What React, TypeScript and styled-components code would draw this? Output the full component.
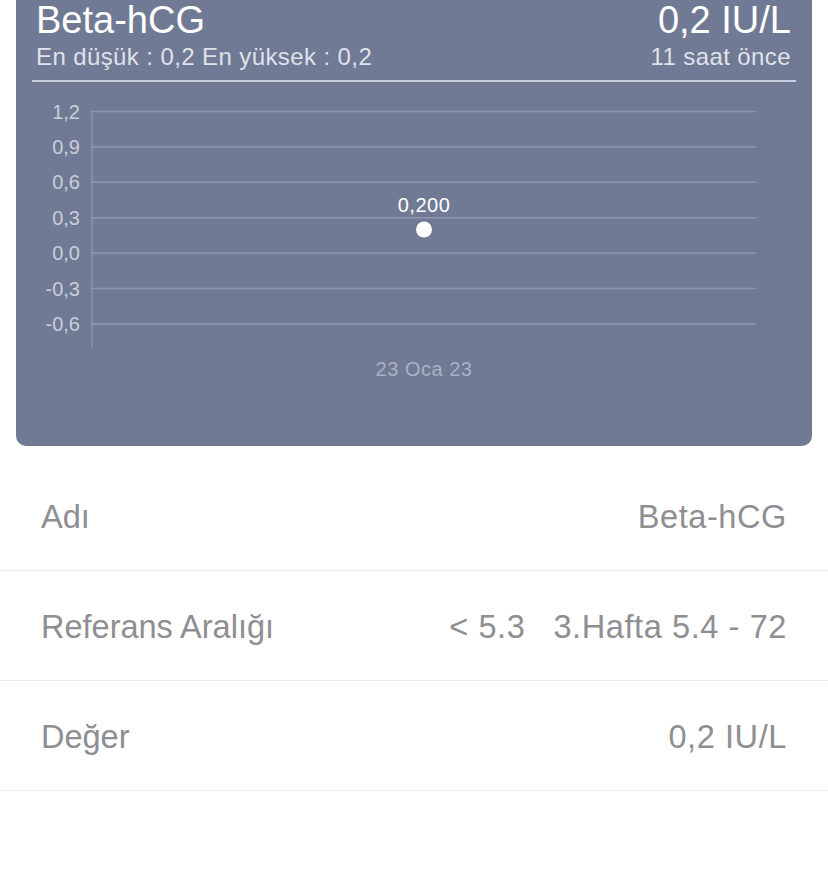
import styled, { createGlobalStyle } from 'styled-components'

const GlobalStyle = createGlobalStyle`
    html, body {
        margin: 0;
        padding: 0;
        background: #ffffff;
        font-family: 'Liberation Sans', Arial, sans-serif;
        overflow: hidden;
    }
`

// grafik ölçüleri (svg içi koordinatlar)
const yTicks = ['1,2', '0,9', '0,6', '0,3', '0,0', '-0,3', '-0,6']
const gridTop = 29.5
const gridStep = 35.4
const axisX = 76
const gridRight = 740

const rows = [
    { label: 'Adı', values: ['Beta-hCG'] },
    { label: 'Referans Aralığı', values: ['< 5.3', '3.Hafta 5.4 - 72'] },
    { label: 'Değer', values: ['0,2 IU/L'] },
]

function Chart() {
    const valueY = gridTop + 4 * gridStep - (0.2 / 0.3) * gridStep
    return (
        <ChartSvg viewBox="0 0 796 364" width="796" height="364">
            {yTicks.map((t, i) => {
                const y = gridTop + i * gridStep
                return (
                    <g key={t}>
                        <line x1={axisX} x2={gridRight} y1={y} y2={y} stroke="rgba(255,255,255,0.22)" strokeWidth="1.5" />
                        <text x="64" y={y + 7} textAnchor="end" fontSize="20" fill="#c9cedb">
                            {t}
                        </text>
                    </g>
                )
            })}
            <line x1={axisX} x2={axisX} y1={gridTop - 1} y2={265} stroke="rgba(255,255,255,0.2)" strokeWidth="1.5" />
            <text x="408" y="130" textAnchor="middle" fontSize="20" letterSpacing="0.5" fill="#ffffff">
                0,200
            </text>
            <circle cx="408" cy={valueY} r="8" fill="#ffffff" />
            <text x="408" y="294" textAnchor="middle" fontSize="20" letterSpacing="0.5" fill="#a9b0c3">
                23 Oca 23
            </text>
        </ChartSvg>
    )
}

function App() {
    return (
        <Page>
            <GlobalStyle />
            <Card>
                <Header>
                    <HeaderRow>
                        <Title>Beta-hCG</Title>
                        <Title>0,2 IU/L</Title>
                    </HeaderRow>
                    <HeaderRow>
                        <Sub>En düşük : 0,2 En yüksek : 0,2</Sub>
                        <Sub>11 saat önce</Sub>
                    </HeaderRow>
                    <Divider />
                </Header>
                <Chart />
            </Card>
            <List>
                {rows.map((r) => (
                    <Row key={r.label}>
                        <Label>{r.label}</Label>
                        <Values>
                            {r.values.map((v) => (
                                <span key={v}>{v}</span>
                            ))}
                        </Values>
                    </Row>
                ))}
            </List>
        </Page>
    )
}

const Page = styled.div`
    width: 828px;
    height: 879px;
    background: #ffffff;
`

const Card = styled.div`
    margin: -20px 16px 0;
    padding-top: 20px;
    background: #707a94;
    border-radius: 10px;
    overflow: hidden;
`

const Header = styled.div`
    padding: 0 16px;
`

const HeaderRow = styled.div`
    display: flex;
    justify-content: space-between;
    align-items: baseline;
    padding: 0 5px 0 4px;
`

const Title = styled.div`
    font-size: 38px;
    line-height: 40px;
    color: #ffffff;
`

const Sub = styled.div`
    margin-top: 3px;
    font-size: 24px;
    line-height: 28px;
    letter-spacing: 0.4px;
    color: #dfe2ea;
`

const Divider = styled.div`
    margin-top: 9px;
    height: 2px;
    background: #c8cde0;
`

const ChartSvg = styled.svg`
    display: block;
    font-family: 'Liberation Sans', Arial, sans-serif;
`

const List = styled.div`
    margin-top: 16px;
`

const Row = styled.div`
    display: flex;
    justify-content: space-between;
    align-items: center;
    height: 109px;
    padding: 3px 41px 0;
    box-sizing: border-box;
    border-bottom: 1px solid #ebebeb;
    & + & {
        height: 110px;
    }
    font-size: 32.5px;
    color: #8e8e93;
`

const Label = styled.span``

const Values = styled.span`
    display: flex;
    gap: 28px;
    letter-spacing: 0.6px;
`

export default App
